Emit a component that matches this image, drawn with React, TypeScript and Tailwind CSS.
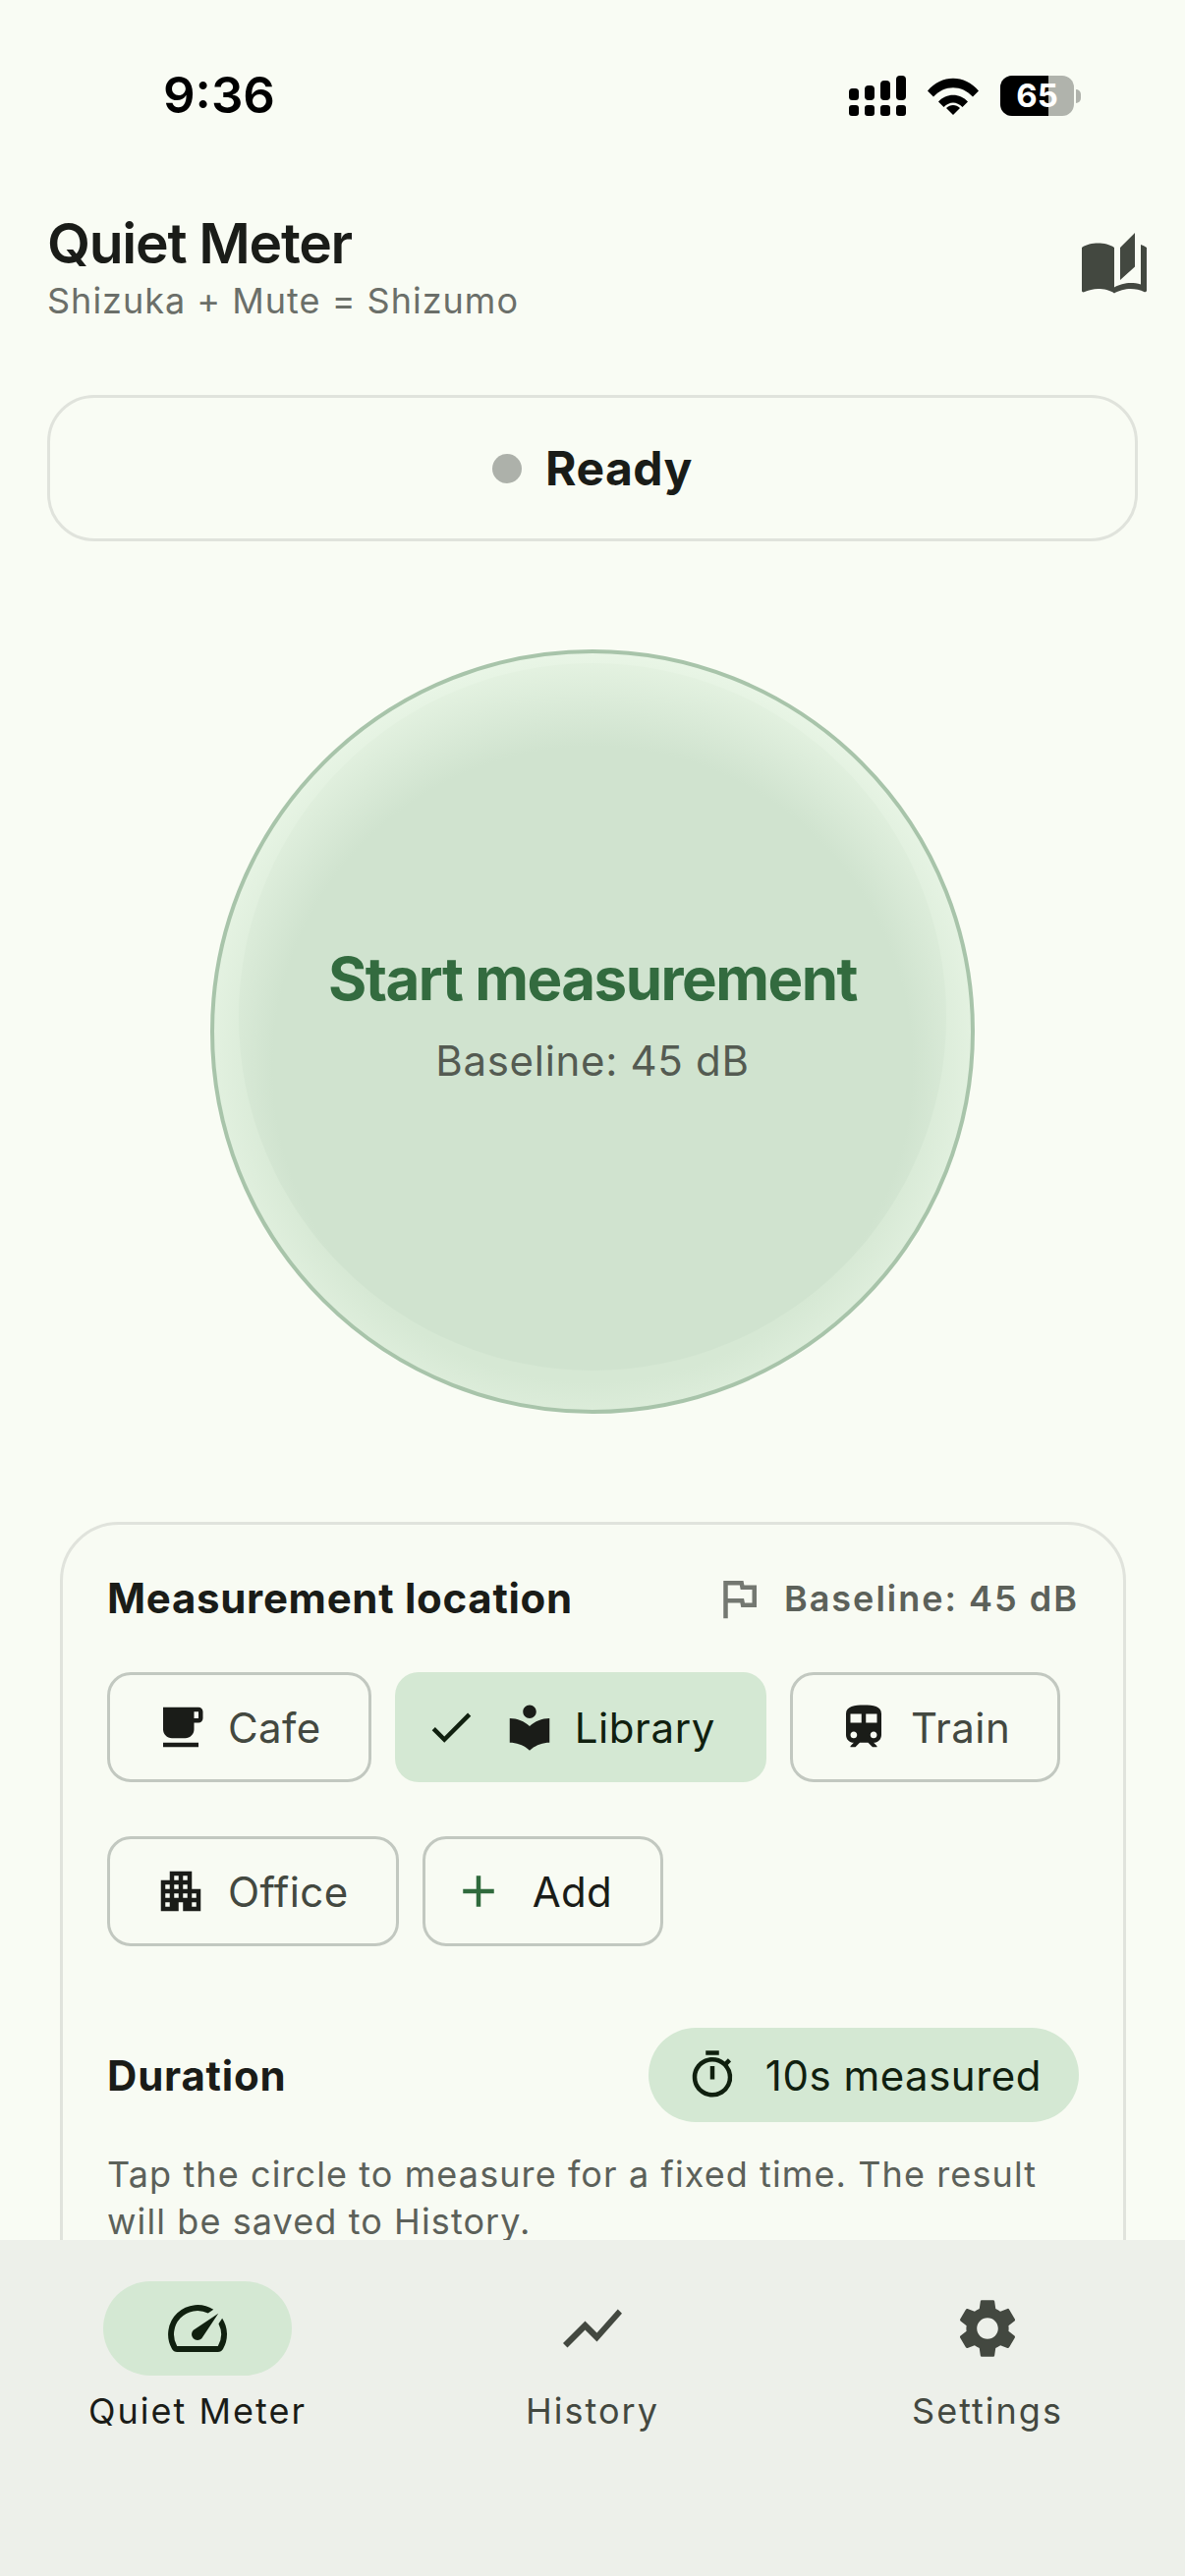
import {
  MdAdd,
  MdApartment,
  MdAutoStories,
  MdCheck,
  MdLocalCafe,
  MdLocalLibrary,
  MdOutlineFlag,
  MdOutlineSpeed,
  MdOutlineTimer,
  MdSettings,
  MdShowChart,
  MdTrain,
} from 'react-icons/md';
import type { ReactNode } from 'react';

function StatusBar() {
  return (
    <div className="flex h-[212px] shrink-0 items-start justify-between pt-[66px] pl-[166px] pr-[106px]">
      <span className="text-[51px] leading-[62px] font-semibold text-black">9:36</span>
      <div className="flex items-center gap-[22px] pt-[11px]">
        <svg width="58" height="41" viewBox="0 0 58 41" fill="#000">
          <rect x="0" y="30" width="10" height="11" rx="3" />
          <rect x="16" y="30" width="10" height="11" rx="3" />
          <rect x="32" y="30" width="10" height="11" rx="3" />
          <rect x="48" y="30" width="10" height="11" rx="3" />
          <rect x="0" y="13" width="10" height="12" rx="3.5" />
          <rect x="16" y="10" width="10" height="15" rx="4" />
          <rect x="32" y="5" width="10" height="20" rx="4" />
          <rect x="48" y="0" width="10" height="25" rx="4" />
        </svg>
        <svg width="52" height="38" viewBox="0 0 52 38" fill="#000">
          <path d="M0 13.5C14 -3.5 38 -3.500 52 13.500L46 19.500C35 7 17 7 6 19.500Z" />
          <path d="M11 24.500C19 15.500 33 15.500 41 24.500L35.500 30C29.500 24 22.500 24 16.500 30Z" />
          <path d="M19 31C23 27 29 27 33 31L26 38Z" />
        </svg>
        <div className="flex items-center gap-[2px]">
          <div className="relative flex h-[41px] w-[75px] items-center justify-center overflow-hidden rounded-[12px] bg-[#b0b3ac]">
            <div className="absolute inset-y-0 left-0 w-[49px] bg-black" />
            <span className="relative text-[33px] leading-none font-bold text-white">65</span>
          </div>
          <div className="h-[14px] w-[5px] rounded-r-full bg-[#b0b3ac]" />
        </div>
      </div>
    </div>
  );
}

function Chip({ icon, label }: { icon: ReactNode; label: string }) {
  return (
    <div className="flex h-[112px] items-center rounded-[24px] border-[3px] border-[#c2c8c0] pl-[45px] pr-[48px] text-[42px] tracking-[0.4px] text-[#434840]">
      <span className="mr-[21px] shrink-0 text-[#1a1c18]">{icon}</span>
      <span>{label}</span>
    </div>
  );
}

function NavItem({ icon, label, active }: { icon: ReactNode; label: string; active?: boolean }) {
  return (
    <div className="flex flex-1 flex-col items-center">
      <div className={`flex h-[96px] w-[192px] items-center justify-center rounded-full ${active ? 'bg-[#d4e8d3] text-[#10200f]' : 'text-[#434840]'}`}>
        {icon}
      </div>
      <span className={`mt-[12px] text-[36px] leading-[48px] tracking-[2px] ${active ? 'text-[#1a1c18]' : 'text-[#434840]'}`}>{label}</span>
    </div>
  );
}

export default function App() {
  return (
    <div
      className="flex h-[2622px] w-[1206px] flex-col overflow-hidden bg-[#f9fcf4] text-[#1a1c18]"
      style={{ fontFamily: 'Inter, Roboto, sans-serif' }}
    >
      <StatusBar />
      <main className="min-h-0 flex-1 overflow-hidden">
        <header className="flex items-center justify-between pl-[48px] pr-[36px]">
          <div>
            <h1 className="text-[57px] leading-[72px] font-semibold tracking-[-1.3px]">Quiet Meter</h1>
            <p className="text-[36px] leading-[44px] tracking-[1px] text-[#6b6f69]">Shizuka + Mute = Shizumo</p>
          </div>
          <MdAutoStories size={72} className="text-[#434840]" />
        </header>

        <div className="mx-[48px] mt-[74px] flex h-[149px] items-center justify-center gap-[24px] rounded-[48px] border-[3px] border-[#e0e3dc]">
          <span className="h-[30px] w-[30px] rounded-full bg-[#adb1aa]" />
          <span className="text-[48px] font-bold tracking-[0.5px]">Ready</span>
        </div>

        <div className="mt-[110px] flex justify-center">
          <div className="flex h-[778px] w-[778px] items-start justify-center rounded-full border-[4px] border-[#a8c4aa] bg-[radial-gradient(circle_430px_at_50%_54.5%,#d6e8d4_75%,#ebf7e8_100%)] pt-[10px]">
            <div className="flex h-[720px] w-[720px] flex-col items-center justify-center rounded-full bg-[radial-gradient(circle_412px_at_50%_57%,#d0e3cf_79%,#e4f2e1_100%)] pb-[4px]">
              <span className="text-[60px] leading-[72px] font-bold tracking-[-1.5px] text-[#336b3f]">Start measurement</span>
              <span className="mt-[22px] text-[42px] leading-[52px] tracking-[0.7px] text-[#545b52]">Baseline: 45 dB</span>
            </div>
          </div>
        </div>

        <section className="mr-[60px] ml-[61px] mt-[110px] rounded-[60px] border-[3px] border-[#e0e3dc] bg-[#f8fbf3] pr-[45px] pl-[45px] pt-[47px] pb-[100px]">
          <div className="flex items-center justify-between">
            <h2 className="text-[42px] leading-[56px] font-bold tracking-[0.7px]">Measurement location</h2>
            <div className="flex items-center gap-[19px] text-[36px] font-semibold tracking-[2px] text-[#5c615a]">
              <MdOutlineFlag size={54} className="text-[#747871]" />
              <span>Baseline: 45 dB</span>
            </div>
          </div>
          <div className="mt-[47px] flex flex-wrap gap-x-[24px] gap-y-[55px]">
            <Chip icon={<MdLocalCafe size={54} />} label="Cafe" />
            <div className="flex h-[112px] items-center rounded-[24px] bg-[#d4e8d3] pl-[30px] pr-[52px] text-[42px] tracking-[0.6px] text-[#10200f]">
              <MdCheck size={54} className="mr-[26px] shrink-0" />
              <MdLocalLibrary size={54} className="mr-[19px] shrink-0 text-[#1a1c18]" />
              <span>Library</span>
            </div>
            <Chip icon={<MdTrain size={54} />} label="Train" />
            <Chip icon={<MdApartment size={54} />} label="Office" />
            <div className="flex h-[112px] items-center rounded-[24px] border-[3px] border-[#c2c8c0] pl-[27px] pr-[49px] text-[42px] tracking-[0.4px] text-[#1a1c18]">
              <MdAdd size={54} className="mr-[28px] shrink-0 text-[#2f6a3c]" />
              <span>Add</span>
            </div>
          </div>
          <div className="mt-[83px] flex items-center justify-between">
            <span className="text-[42px] font-bold tracking-[0.8px]">Duration</span>
            <div className="flex h-[96px] items-center gap-[27px] rounded-full bg-[#d4e8d3] pr-[38px] pl-[38px] text-[42px] tracking-[0.5px] text-[#10200f]">
              <MdOutlineTimer size={54} />
              <span>10s measured</span>
            </div>
          </div>
          <p className="mt-[29px] text-[36px] leading-[48px] tracking-[1.1px] text-[#5c615a]">
            Tap the circle to measure for a fixed time. The result will be saved to History.
          </p>
        </section>
      </main>
      <nav className="flex h-[342px] shrink-0 bg-[#edf0ea] pt-[42px]">
        <NavItem icon={<MdOutlineSpeed size={72} />} label="Quiet Meter" active />
        <NavItem icon={<MdShowChart size={72} />} label="History" />
        <NavItem icon={<MdSettings size={72} />} label="Settings" />
      </nav>
    </div>
  );
}
